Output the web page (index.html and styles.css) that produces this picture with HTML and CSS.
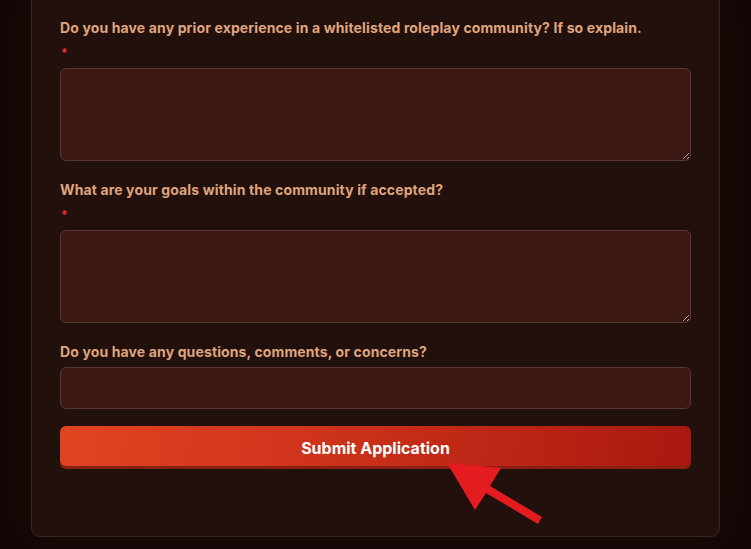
FILE: index.html
```html
<!DOCTYPE html>
<html>
<head>
<meta charset="utf-8">
<link rel="stylesheet" href="styles.css">
</head>
<body>
<div class="page">
  <form class="card">
    <div class="field">
      <label class="label">Do you have any prior experience in a whitelisted roleplay community? If so explain.</label>
      <span class="req">*</span>
      <textarea class="area"></textarea>
    </div>
    <div class="field">
      <label class="label">What are your goals within the community if accepted?</label>
      <span class="req">*</span>
      <textarea class="area"></textarea>
    </div>
    <div class="field">
      <label class="label">Do you have any questions, comments, or concerns?</label>
      <input class="input" type="text">
    </div>
    <div class="submit-wrap">
      <button class="submit" type="button">Submit Application</button>
      <svg class="arrow" width="110" height="70" viewBox="0 0 110 70">
        <polygon fill="#e51c1f" points="7,3 61,8 50,26 102,57 98,64 46,33 35,50"/>
      </svg>
    </div>
  </form>
</div>
</body>
</html>
```
FILE: styles.css
```css
html, body {
  margin: 0;
  padding: 0;
  background: #130706;
  height: 100%;
}
body {
  font-family: "Inter", "Roboto", sans-serif;
}
.page {
  padding: 0 31px 12px 31px;
}
.card {
  display: flex;
  flex-direction: column;
  width: 631px;
  padding: 18px 28px 70px 28px;
  background: #22100d;
  border: 1px solid #3b2521;
  border-top: 0;
  border-radius: 0 0 9px 9px;
  box-shadow: 0 0 40px rgba(40, 12, 8, 0.5);
}
.field {
  display: flex;
  flex-direction: column;
  margin-bottom: 19px;
}
.label {
  color: #dfa47e;
  font-weight: 700;
  font-size: 14px;
  line-height: 20px;
  letter-spacing: 0.13px;
  margin-bottom: 5px;
}
.req {
  color: #e2351f;
  font-weight: 700;
  font-size: 12px;
  line-height: 20px;
  height: 20px;
  padding-top: 5px;
  margin-top: -5px;
  margin-bottom: 5px;
  margin-left: 1px;
}
.area, .input {
  box-sizing: border-box;
  width: 100%;
  background: #3c1812;
  border: 1px solid #593632;
  border-radius: 6px;
  color: #f0d0c0;
  font-family: inherit;
  font-size: 14px;
  outline: none;
  margin: 0;
}
.area {
  height: 93px;
  display: block;
  resize: vertical;
}
.input {
  height: 42px;
  padding: 0 12px;
}
.field:nth-child(3) {
  margin-bottom: 17px;
}
.submit-wrap {
  position: relative;
}
.submit {
  display: block;
  box-sizing: border-box;
  width: 100%;
  height: 40px;
  margin: 0;
  padding: 3px 0 0 0;
  border: 0;
  border-radius: 6px;
  background: linear-gradient(100deg, #e14421 0%, #cf331b 40%, #a8180f 100%);
  box-shadow: 0 3px 0 #8a1f14;
  color: #ffffff;
  font-family: "Inter", "Roboto", sans-serif;
  font-weight: 700;
  font-size: 16px;
  cursor: pointer;
}
.arrow {
  position: absolute;
  left: 380px;
  top: 34px;
}
```
